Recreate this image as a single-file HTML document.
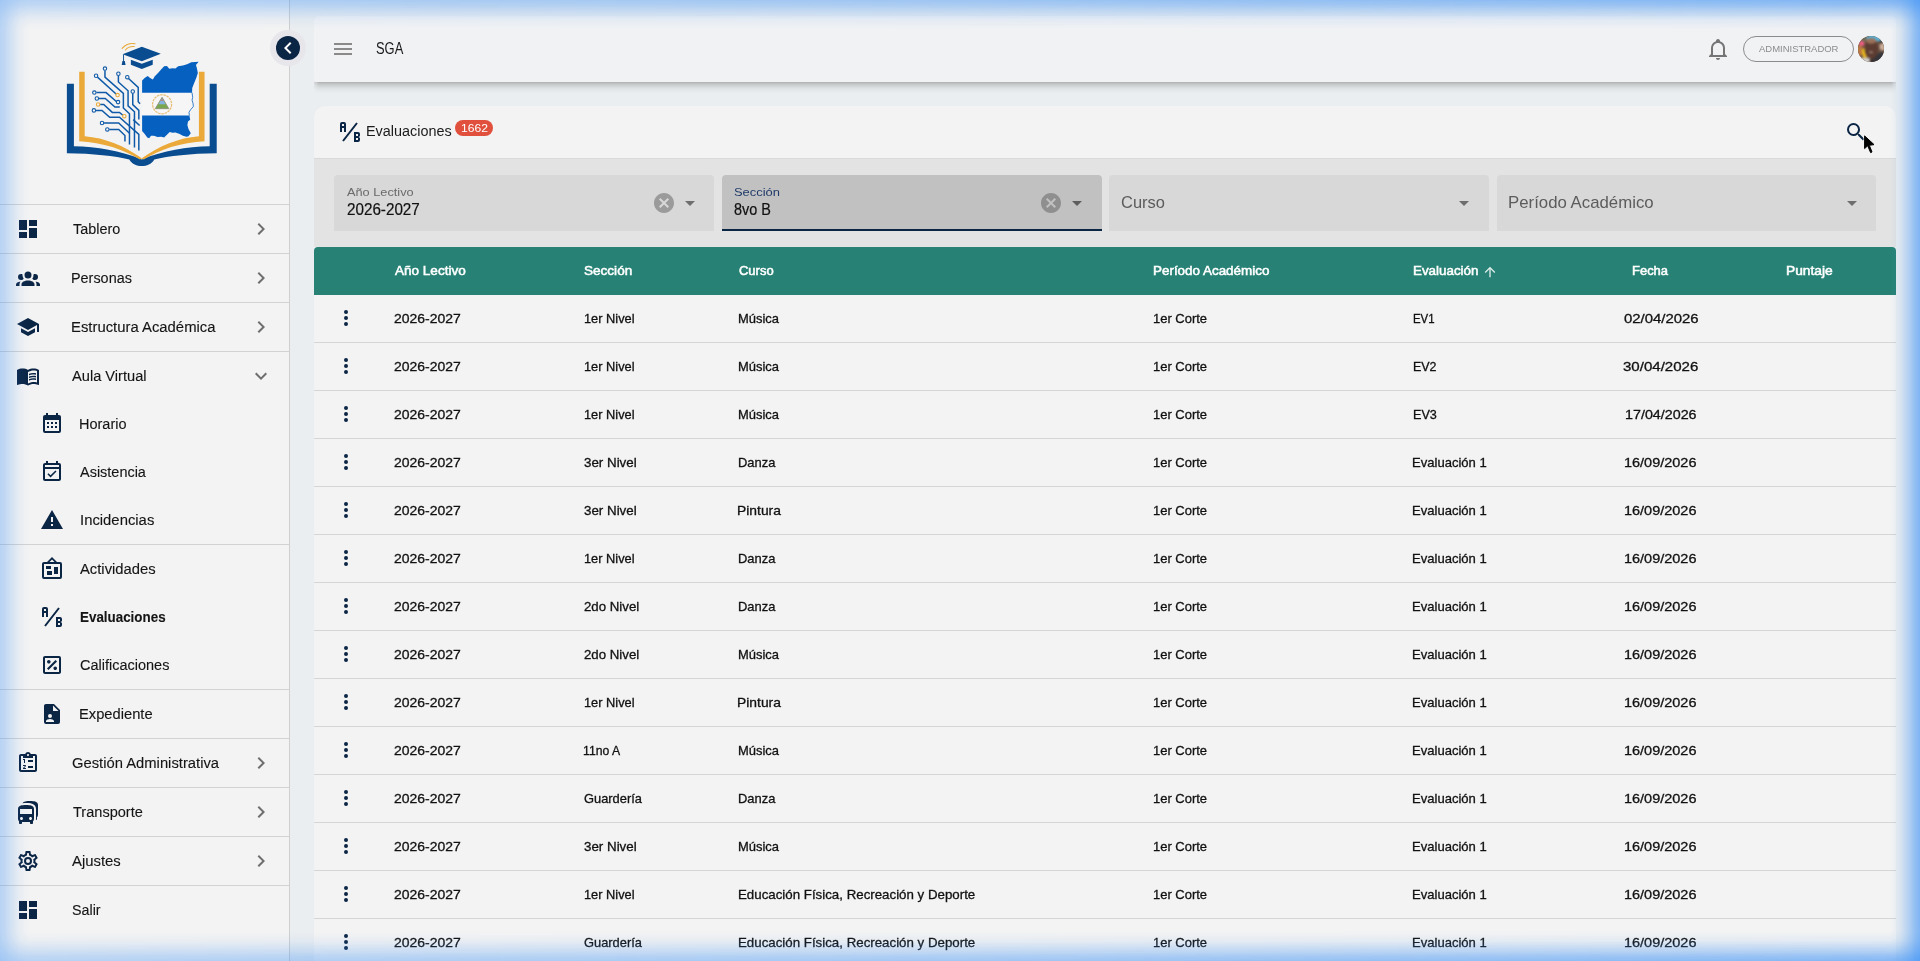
<!DOCTYPE html>
<html lang="es"><head><meta charset="utf-8"><title>SGA - Evaluaciones</title>
<style>
*{box-sizing:border-box;margin:0;padding:0}
html,body{width:1920px;height:961px;overflow:hidden}
body{position:relative;background:#ebeef0;font-family:"Liberation Sans",sans-serif;color:#1b1b1b}
ul{list-style:none}
h1{font-weight:400}
.t{position:absolute;white-space:nowrap;line-height:1;transform-origin:0 50%;display:block}
.i{position:absolute;fill:#0b2545;display:block}
.a{position:absolute;display:block}
#side{position:absolute;left:0;top:0;width:290px;height:961px;background:#f3f3f3;border-right:1px solid #cfcfcf}
#side li{position:absolute;left:0;width:289px;height:48px}
#side li.dv{height:1px;background:#d2d2d2}
#colb{position:absolute;left:270px;top:30px;width:36px;height:36px;border-radius:50%;background:#e7e7eb}
#colb b{position:absolute;left:6px;top:6px;width:24px;height:24px;border-radius:50%;background:#0b2545;display:block}
#top{position:absolute;left:314px;top:16px;width:1582px;height:66px;background:#f1f2f4;border-radius:5px 5px 3px 3px}
#tsh{position:absolute;left:314px;top:82px;width:1582px;height:12px;background:linear-gradient(to bottom,rgba(0,0,0,.26),rgba(0,0,0,.17) 2px,rgba(0,0,0,.105) 4px,rgba(0,0,0,.06) 6px,rgba(0,0,0,.028) 8px,rgba(0,0,0,0) 11.5px);-webkit-mask-image:linear-gradient(to right,rgba(0,0,0,.35),#000 5px,#000 1577px,rgba(0,0,0,.35));mask-image:linear-gradient(to right,rgba(0,0,0,.35),#000 5px,#000 1577px,rgba(0,0,0,.35))}
#chip{position:absolute;left:1429px;top:20px;width:111px;height:26px;border:1px solid #8c8c8c;border-radius:13px;color:#8c8c8c}
#av{position:absolute;left:1544px;top:20px;width:26px;height:26px;border-radius:50%;overflow:hidden;background:#8a6a55}
#card{position:absolute;left:314px;top:106px;width:1582px;height:900px;background:#f3f3f3;border-radius:12px 12px 0 0;overflow:hidden}
#ttl{position:absolute;left:0;top:0;width:1582px;height:52px}
#flt{position:absolute;left:0;top:52px;width:1582px;height:89px;background:#e3e3e3;border-top:1px solid #d9d9d9}
.f{position:absolute;top:16px;height:56px;background:#d8d8d8;border-radius:4px 4px 0 0}
.f.on{background:#c1c1c1;border-bottom:2px solid #0b2545}
.lb{color:#6a6a6a}
.on .lb{color:#1f3a68}
.ph{color:#5c5c5c}
#tbl{position:absolute;left:0;top:141px;width:1582px;height:759px}
#th{position:absolute;left:0;top:0;width:1582px;height:48px;background:#278275;border-radius:4px 4px 0 0}
.h{color:#fff;-webkit-text-stroke:.5px #fff}
.fv{color:#111;-webkit-text-stroke:.2px #111}
.rt{color:#111;-webkit-text-stroke:.28px #111}
.s{color:#151515;-webkit-text-stroke:.12px #151515}
.tr{position:absolute;left:0;width:1582px;height:48px;border-bottom:1px solid #d6d6d6}
#badge{position:absolute;left:141px;top:14px;width:38px;height:16px;border-radius:8px;background:#e0503d;color:#fff}
</style></head>
<body>
<nav id="side">
<svg class="a" style="left:50px;top:30px;width:190px;height:150px" viewBox="0 0 1217 961"><path fill="#0a4c90" d="M108,345H153V745C300,748 450,772 588,830C726,772 876,748 1023,745V345H1068V790C900,792 760,808 668,830C650,860 620,872 588,872C556,872 526,860 508,830C416,808 276,792 108,790Z"/><path fill="#eaa938" d="M187,268H222V680C350,690 480,742 588,822C696,742 826,690 954,680V268H990V712C840,720 700,765 600,830L588,824L576,830C476,765 336,720 187,712Z"/><g fill="none" stroke="#0f5aa8" stroke-width="9.5"><path d="M352,260 L352,302 L470,406 L470,500 L509,537 L509,733"/><path d="M304,302 L425,412"/><path d="M438,293 L438,333 L500,389 L500,486 L541,524 L541,753"/><path d="M503,311 L565,368 L565,460 L577,472"/><path d="M530,406 L530,478 L569,515 L569,574"/><path d="M297,401 L359,401 L425,458"/><path d="M312,439 L354,439 L416,494 L447,494"/><path d="M321,477 L344,477 L399,528 L445,528 L467,546"/><path d="M294,515 L333,515 L382,559 L445,559 L569,669 L569,772"/><path d="M346,596 L440,596 L509,662"/><path d="M379,637 L440,637 L480,676 L480,714"/><path d="M533,574 L574,612"/></g><g fill="#f3f3f3" stroke="#0f5aa8" stroke-width="7"><circle cx="352" cy="247" r="11"/><circle cx="295" cy="293" r="11"/><circle cx="438" cy="280" r="11"/><circle cx="495" cy="302" r="11"/><circle cx="530" cy="394" r="11"/><circle cx="284" cy="401" r="11"/><circle cx="300" cy="439" r="11"/><circle cx="436" cy="462" r="11"/><circle cx="281" cy="515" r="11"/><circle cx="333" cy="596" r="11"/><circle cx="367" cy="637" r="11"/></g><g fill="#f3f3f3" stroke="#eaa938" stroke-width="7"><circle cx="433" cy="417" r="11"/><circle cx="308" cy="477" r="11"/><circle cx="476" cy="552" r="11"/></g><path fill="#f6f6f6" d="M590,402L910,402L914,431L910,449L917,473L918,491L902,509L890,527L893,548L590,548Z"/><path fill="none" stroke="#0560c0" stroke-width="5" d="M910,402L914,431L910,449L917,473L918,491L902,509L890,527L893,548"/><path fill="#0560c0" d="M590,402L590,324L608,306L626,294L641,308L659,317L671,296L695,272L713,251L731,233L749,231L764,248L785,245L803,246L821,233L851,227L878,219L905,206L952,204L935,224L941,245L947,275L938,305L923,341L911,371L910,402Z"/><path fill="#0560c0" d="M590,548L893,548L898,575L884,587L880,608L887,635L902,662L887,680L875,684L851,677L827,665L803,656L785,659L767,654L749,671L731,688L713,684L689,686L665,677L647,678L635,694L623,689L608,668L590,647Z"/><circle cx="718" cy="476" r="61" fill="none" stroke="#e6bd75" stroke-width="8" stroke-dasharray="16 5"/><path d="M718,431L761,504H674Z" fill="#79a64f" stroke="#8d8a78" stroke-width="5" stroke-linejoin="round"/><path d="M718,438L740,476H695Z" fill="#86b4e4"/><path d="M718,438L727,455H708Z" fill="#b9878a"/><path fill="#0a4c90" d="M465,155L588,108L710,152L588,200Z"/><path fill="#0a4c90" d="M518,190L588,217L658,190V222L588,250L518,222Z"/><path fill="none" stroke="#0a4c90" stroke-width="6" d="M471,158V205"/><path fill="#0a4c90" d="M464,198H479L484,224H459Z"/><g fill="none" stroke="#eaa938" stroke-width="7" stroke-linecap="round"><path d="M462,118Q495,80 545,88"/><path d="M483,128Q505,102 540,106"/></g></svg>
<ul>
<li class="dv" style="top:204px"></li>
<li style="top:205px"><svg class="i" viewBox="0 0 24 24" style="left:16.00px;top:12.00px;width:24px;height:24px;"><path d="M13 3v6h8V3m-8 18h8V11h-8M3 21h8v-6H3m0-2h8V3H3z"/></svg><span class="t s" style="left:72.66px;top:15.96px;font-size:15.4px;transform:scaleX(0.9360);">Tablero</span><svg class="i" viewBox="0 0 24 24" style="left:249.20px;top:12.20px;width:24px;height:24px;fill:#6e6e6e;"><path d="M8.59 16.58 13.17 12 8.59 7.41 10 6l6 6-6 6z"/></svg></li>
<li class="dv" style="top:253px"></li>
<li style="top:254px"><svg class="i" viewBox="0 0 24 24" style="left:16.00px;top:12.00px;width:24px;height:24px;"><path d="M12 5.5A3.5 3.5 0 0 1 15.5 9a3.5 3.5 0 0 1-3.5 3.5A3.5 3.5 0 0 1 8.5 9 3.5 3.5 0 0 1 12 5.5M5 8c.56 0 1.08.15 1.53.42-.15 1.43.27 2.85 1.13 3.96C7.16 13.34 6.16 14 5 14a3 3 0 0 1-3-3 3 3 0 0 1 3-3m14 0a3 3 0 0 1 3 3 3 3 0 0 1-3 3c-1.16 0-2.16-.66-2.66-1.62a5.54 5.54 0 0 0 1.13-3.96c.45-.27.97-.42 1.53-.42M5.5 18.25c0-2.07 2.91-3.75 6.5-3.75s6.5 1.68 6.5 3.75V20h-13zM0 20v-1.5c0-1.39 1.89-2.56 4.45-2.9-.59.68-.95 1.62-.95 2.65V20zm24 0h-3.5v-1.75c0-1.03-.36-1.97-.95-2.65 2.56.34 4.45 1.51 4.45 2.9z"/></svg><span class="t s" style="left:71.07px;top:15.96px;font-size:15.4px;transform:scaleX(0.9360);">Personas</span><svg class="i" viewBox="0 0 24 24" style="left:249.20px;top:12.20px;width:24px;height:24px;fill:#6e6e6e;"><path d="M8.59 16.58 13.17 12 8.59 7.41 10 6l6 6-6 6z"/></svg></li>
<li class="dv" style="top:302px"></li>
<li style="top:303px"><svg class="i" viewBox="0 0 24 24" style="left:16.00px;top:12.00px;width:24px;height:24px;"><path d="M12 3 1 9l11 6 9-4.91V17h2V9M5 13.18v4L12 21l7-3.82v-4L12 17z"/></svg><span class="t s" style="left:71.01px;top:15.96px;font-size:15.4px;transform:scaleX(0.9653);">Estructura Académica</span><svg class="i" viewBox="0 0 24 24" style="left:249.20px;top:12.20px;width:24px;height:24px;fill:#6e6e6e;"><path d="M8.59 16.58 13.17 12 8.59 7.41 10 6l6 6-6 6z"/></svg></li>
<li class="dv" style="top:351px"></li>
<li style="top:352px"><svg class="i" viewBox="0 0 24 24" style="left:16.00px;top:12.00px;width:24px;height:24px;"><path d="M12 21.5c-1.35-.85-3.8-1.5-5.5-1.5-1.65 0-3.35.3-4.75 1.05-.1.05-.15.05-.25.05-.25 0-.5-.25-.5-.5V6c.6-.45 1.25-.75 2-1 1.11-.35 2.33-.5 3.5-.5 1.95 0 4.05.4 5.5 1.5 1.45-1.1 3.55-1.5 5.5-1.5 1.17 0 2.39.15 3.5.5.75.25 1.4.55 2 1v14.6c0 .25-.25.5-.5.5-.1 0-.15 0-.25-.05-1.4-.75-3.1-1.05-4.75-1.05-1.7 0-4.15.65-5.5 1.5M12 8v11.5c1.35-.85 3.8-1.5 5.5-1.5 1.2 0 2.4.15 3.5.5V7c-1.1-.35-2.3-.5-3.5-.5-1.7 0-4.15.65-5.5 1.5m1 3.5c1.11-.68 2.6-1 4.5-1 .91 0 1.76.09 2.5.28V9.23c-.87-.15-1.71-.23-2.5-.23q-2.655 0-4.5.84zm4.5.17c-1.71 0-3.21.26-4.5.79v1.69c1.11-.65 2.6-.99 4.5-.99 1.04 0 1.88.08 2.5.24v-1.5c-.87-.16-1.71-.23-2.5-.23m2.5 2.9c-.87-.16-1.71-.24-2.5-.24-1.83 0-3.33.27-4.5.8v1.69c1.11-.66 2.6-.99 4.5-.99 1.04 0 1.88.08 2.5.24z"/></svg><span class="t s" style="left:72.18px;top:15.96px;font-size:15.4px;transform:scaleX(0.9511);">Aula Virtual</span><svg class="i" viewBox="0 0 24 24" style="left:249.00px;top:12.00px;width:24px;height:24px;fill:#6e6e6e;"><path d="M7.41 8.58 12 13.17l4.59-4.59L18 10l-6 6-6-6z"/></svg></li>
<li style="top:400px"><svg class="i" viewBox="0 0 24 24" style="left:40.00px;top:12.00px;width:24px;height:24px;"><path d="M9 10v2H7v-2zm4 0v2h-2v-2zm4 0v2h-2v-2zm2-7a2 2 0 0 1 2 2v14a2 2 0 0 1-2 2H5a2 2 0 0 1-2-2V5a2 2 0 0 1 2-2h1V1h2v2h8V1h2v2zm0 16V8H5v11zM9 14v2H7v-2zm4 0v2h-2v-2zm4 0v2h-2v-2z"/></svg><span class="t s" style="left:79.25px;top:15.96px;font-size:15.4px;transform:scaleX(0.9410);">Horario</span></li>
<li style="top:448px"><svg class="i" viewBox="0 0 24 24" style="left:40.00px;top:12.00px;width:24px;height:24px;"><path d="M19 3h-1V1h-2v2H8V1H6v2H5c-1.1 0-2 .9-2 2v14a2 2 0 0 0 2 2h14c1.11 0 2-.89 2-2V5a2 2 0 0 0-2-2m0 16H5V9h14zM5 7V5h14v2zm5.56 10.46 5.94-5.93-1.07-1.06-4.87 4.87-2.11-2.11-1.06 1.06z"/></svg><span class="t s" style="left:80.38px;top:15.96px;font-size:15.4px;transform:scaleX(0.9397);">Asistencia</span></li>
<li style="top:496px"><svg class="i" viewBox="0 0 24 24" style="left:40.00px;top:12.00px;width:24px;height:24px;"><path d="M13 14h-2V9h2m0 9h-2v-2h2M1 21h22L12 2z"/></svg><span class="t s" style="left:79.74px;top:15.96px;font-size:15.4px;transform:scaleX(0.9650);">Incidencias</span></li>
<li class="dv" style="top:544px"></li>
<li style="top:545px"><svg class="i" viewBox="0 0 24 24" style="left:40.00px;top:12.00px;width:24px;height:24px;"><path d="M12.04 2.5 9.53 5h5zM4 7v13h16V7zm8-7 5 5h3a2 2 0 0 1 2 2v13a2 2 0 0 1-2 2H4a2 2 0 0 1-2-2V7a2 2 0 0 1 2-2h3zM7 18v-4h5v4zm7-1v-7h4v7zm-8-5V9h5v3z"/></svg><span class="t s" style="left:80.38px;top:15.96px;font-size:15.4px;transform:scaleX(0.9610);">Actividades</span></li>
<li style="top:593px"><svg class="i" viewBox="0 0 24 24" style="left:40.00px;top:12.00px;width:24px;height:24px;"><path d="M4 2a2 2 0 0 0-2 2v8h2V8h2v4h2V4a2 2 0 0 0-2-2zm0 2h2v2H4m18 9.5V14a2 2 0 0 0-2-2h-4v10h4a2 2 0 0 0 2-2v-1.5a1.54 1.54 0 0 0-1.5-1.5 1.54 1.54 0 0 0 1.5-1.5M20 20h-2v-2h2zm0-4h-2v-2h2M5.79 21.61l-1.58-1.22 14-18 1.58 1.22Z"/></svg><span class="t s" style="left:80.11px;top:15.96px;font-size:15.4px;transform:scaleX(0.8701);font-weight:700;">Evaluaciones</span></li>
<li style="top:641px"><svg class="i" viewBox="0 0 24 24" style="left:40.00px;top:12.00px;width:24px;height:24px;"><path d="M19 3H5c-1.11 0-2 .89-2 2v14a2 2 0 0 0 2 2h14c1.11 0 2-.89 2-2V5a2 2 0 0 0-2-2m0 16H5V5h14zm-2-3.78c0 .98-.8 1.78-1.78 1.78s-1.77-.8-1.77-1.78.79-1.77 1.77-1.77 1.78.79 1.78 1.77m-8.5 1.81L7 15.53 15.53 7l1.5 1.5zm-1.45-8.2c0-.99.79-1.78 1.78-1.78.98 0 1.77.79 1.77 1.78 0 .98-.79 1.77-1.77 1.77-.99 0-1.78-.79-1.78-1.77"/></svg><span class="t s" style="left:79.97px;top:15.96px;font-size:15.4px;transform:scaleX(0.9416);">Calificaciones</span></li>
<li class="dv" style="top:689px"></li>
<li style="top:690px"><svg class="i" viewBox="0 0 24 24" style="left:40.00px;top:12.00px;width:24px;height:24px;"><path d="M13 9h5.5L13 3.5zM6 2h8l6 6v12a2 2 0 0 1-2 2H6a2 2 0 0 1-2-2V4c0-1.11.89-2 2-2m8 18v-1c0-1.33-2.67-2-4-2s-4 .67-4 2v1zm-4-8a2 2 0 0 0-2 2 2 2 0 0 0 2 2 2 2 0 0 0 2-2 2 2 0 0 0-2-2"/></svg><span class="t s" style="left:79.22px;top:15.96px;font-size:15.4px;transform:scaleX(0.9552);">Expediente</span></li>
<li class="dv" style="top:738px"></li>
<li style="top:739px"><svg class="i" viewBox="0 0 24 24" style="left:16.00px;top:12.00px;width:24px;height:24px;"><path d="M19 3h-4.18C14.4 1.84 13.3 1 12 1s-2.4.84-2.82 2H5c-1.1 0-2 .9-2 2v14c0 1.1.9 2 2 2h14c1.1 0 2-.9 2-2V5c0-1.1-.9-2-2-2m-7 0c.55 0 1 .45 1 1s-.45 1-1 1-1-.45-1-1 .45-1 1-1M7 7h10V5h2v14H5V5h2zm5 10v-2h5v2zm0-6V9h5v2zm-4 1V9H7V8h2v4zm1.25 2c.41 0 .75.34.75.75 0 .2-.08.39-.21.52L8.12 17H10v1H7v-.92L9 15H7v-1z"/></svg><span class="t s" style="left:71.74px;top:15.96px;font-size:15.4px;transform:scaleX(0.9602);">Gestión Administrativa</span><svg class="i" viewBox="0 0 24 24" style="left:249.20px;top:12.20px;width:24px;height:24px;fill:#6e6e6e;"><path d="M8.59 16.58 13.17 12 8.59 7.41 10 6l6 6-6 6z"/></svg></li>
<li class="dv" style="top:787px"></li>
<li style="top:788px"><svg class="i" viewBox="0 0 24 24" style="left:16.00px;top:12.00px;width:24px;height:24px;"><path d="M10 5c-4.42 0-8 .5-8 4v10c0 .85.37 1.66 1 2.22V23c0 .55.45 1 1 1h1c.55 0 1-.45 1-1v-1h8v1c0 .55.45 1 1 1h1c.55 0 1-.45 1-1v-1.78c.63-.56 1-1.37 1-2.22V9c0-3.5-3.58-4-8-4M5.5 20c-.83 0-1.5-.67-1.5-1.5S4.67 17 5.5 17s1.5.67 1.5 1.5S6.33 20 5.5 20m9 0c-.83 0-1.5-.67-1.5-1.5s.67-1.5 1.5-1.5 1.5.67 1.5 1.5-.67 1.5-1.5 1.5m1.5-6H4V9h12zm6-9v10c0 .85-.37 1.66-1 2.22V19c0 .55-.45 1-1 1h-.12c.07-.32.12-.65.12-1V9c0-6-7-6-10-6-.91 0-2.2 0-3.54.17C7.55 1.32 10.5 1 14 1c4.42 0 8 .5 8 4"/></svg><span class="t s" style="left:72.66px;top:15.96px;font-size:15.4px;transform:scaleX(0.9459);">Transporte</span><svg class="i" viewBox="0 0 24 24" style="left:249.20px;top:12.20px;width:24px;height:24px;fill:#6e6e6e;"><path d="M8.59 16.58 13.17 12 8.59 7.41 10 6l6 6-6 6z"/></svg></li>
<li class="dv" style="top:836px"></li>
<li style="top:837px"><svg class="i" viewBox="0 0 24 24" style="left:16.00px;top:12.00px;width:24px;height:24px;"><path d="M12 8a4 4 0 0 1 4 4 4 4 0 0 1-4 4 4 4 0 0 1-4-4 4 4 0 0 1 4-4m0 2a2 2 0 0 0-2 2 2 2 0 0 0 2 2 2 2 0 0 0 2-2 2 2 0 0 0-2-2m-2 12c-.25 0-.46-.18-.5-.42l-.37-2.65c-.63-.25-1.17-.59-1.69-.99l-2.49 1.01c-.22.08-.49 0-.61-.22l-2-3.46a.493.493 0 0 1 .12-.64l2.11-1.66L4.5 12l.07-1-2.11-1.63a.493.493 0 0 1-.12-.64l2-3.46c.12-.22.39-.31.61-.22l2.49 1c.52-.39 1.06-.73 1.69-.98l.37-2.65c.04-.24.25-.42.5-.42h4c.25 0 .46.18.5.42l.37 2.65c.63.25 1.17.59 1.69.98l2.49-1c.22-.09.49 0 .61.22l2 3.46c.13.22.07.49-.12.64L19.43 11l.07 1-.07 1 2.11 1.63c.19.15.25.42.12.64l-2 3.46c-.12.22-.39.31-.61.22l-2.49-1c-.52.39-1.06.73-1.69.98l-.37 2.65c-.04.24-.25.42-.5.42zm1.25-18-.37 2.61c-1.2.25-2.26.89-3.03 1.78L5.44 7.35l-.75 1.3L6.8 10.2a5.55 5.55 0 0 0 0 3.6l-2.12 1.56.75 1.3 2.43-1.04c.77.88 1.82 1.52 3.01 1.76l.37 2.62h1.52l.37-2.61c1.19-.25 2.24-.89 3.01-1.77l2.43 1.04.75-1.3-2.12-1.55c.4-1.17.4-2.44 0-3.61l2.11-1.55-.75-1.3-2.41 1.04a5.42 5.42 0 0 0-3.03-1.77L12.75 4z"/></svg><span class="t s" style="left:72.18px;top:15.96px;font-size:15.4px;transform:scaleX(0.9646);">Ajustes</span><svg class="i" viewBox="0 0 24 24" style="left:249.20px;top:12.20px;width:24px;height:24px;fill:#6e6e6e;"><path d="M8.59 16.58 13.17 12 8.59 7.41 10 6l6 6-6 6z"/></svg></li>
<li class="dv" style="top:885px"></li>
<li style="top:886px"><svg class="i" viewBox="0 0 24 24" style="left:16.00px;top:12.00px;width:24px;height:24px;"><path d="M13 3v6h8V3m-8 18h8V11h-8M3 21h8v-6H3m0-2h8V3H3z"/></svg><span class="t s" style="left:71.95px;top:15.96px;font-size:15.4px;transform:scaleX(0.9280);">Salir</span></li>
</ul></nav>
<div id="tsh"></div>
<header id="top">
<svg class="i" viewBox="0 0 24 24" style="left:17.00px;top:21.00px;width:24px;height:24px;fill:#8a8a8a;"><path d="M3 6h18v2H3zm0 5h18v2H3zm0 5h18v2H3z"/></svg>
<span class="t" style="left:61.50px;top:24.79px;font-size:15.6px;transform:scaleX(0.8268);">SGA</span>
<svg class="i" viewBox="0 0 24 24" style="left:1391.70px;top:20.80px;width:24px;height:24px;fill:#757575;"><path d="M10 21h4c0 1.1-.9 2-2 2s-2-.9-2-2m11-2v1H3v-1l2-2v-6c0-3.1 2-5.8 5-6.7V4c0-1.1.9-2 2-2s2 .9 2 2v.3c3 .9 5 3.6 5 6.7v6zm-4-8c0-2.8-2.2-5-5-5s-5 2.2-5 5v7h10z"/></svg>
<div id="chip"><span class="t" style="left:14.99px;top:6.79px;font-size:9.7px;transform:scaleX(0.9774);">ADMINISTRADOR</span></div>
<div id="av"><svg width="26" height="26" viewBox="0 0 26 26"><rect width="26" height="26" fill="#6b5142"/><g style="filter:blur(.9px)"><rect x="-3" y="-3" width="11" height="9" fill="#6e6a52"/><ellipse cx="17" cy="2" rx="9" ry="3.6" fill="#58b5dc"/><ellipse cx="24.5" cy="10.5" rx="3" ry="4" fill="#cdb09c"/><ellipse cx="23.5" cy="6" rx="2" ry="1.6" fill="#3a2e2a"/><circle cx="3.6" cy="7.4" r="2.7" fill="#ee5c84"/><ellipse cx="1.4" cy="14.5" rx="3" ry="5.5" fill="#bb7a42"/><path d="M4.2 12.5 L8.2 12 L9.6 20 L6 23 L4 18Z" fill="#ecbc1e"/><path d="M2 22 L12 21.5 L12 29 L0 29Z" fill="#cfcdca"/><path d="M16 19.5 L23 16 L29 17 L29 29 L12 29Z" fill="#35363c"/><ellipse cx="13.4" cy="13" rx="6.8" ry="10" fill="#5c3c31"/><ellipse cx="13.2" cy="4.8" rx="5.2" ry="2.9" fill="#9b725a"/><ellipse cx="13" cy="16.3" rx="2.2" ry=".8" fill="#b79a8c"/><ellipse cx="13" cy="24.6" rx="1.2" ry="1.6" fill="#2c1a16"/></g></svg></div>
</header>
<div id="colb"><b></b><svg class="i" viewBox="0 0 24 24" style="left:5.60px;top:6.00px;width:24px;height:24px;fill:#fff;"><path d="M15.41 16.58 10.83 12l4.58-4.59L14 6l-6 6 6 6z"/></svg></div>
<main id="card">
<div id="ttl">
<svg class="i" viewBox="0 0 24 24" style="left:24.00px;top:14.00px;width:24px;height:24px;"><path d="M4 2a2 2 0 0 0-2 2v8h2V8h2v4h2V4a2 2 0 0 0-2-2zm0 2h2v2H4m18 9.5V14a2 2 0 0 0-2-2h-4v10h4a2 2 0 0 0 2-2v-1.5a1.54 1.54 0 0 0-1.5-1.5 1.54 1.54 0 0 0 1.5-1.5M20 20h-2v-2h2zm0-4h-2v-2h2M5.79 21.61l-1.58-1.22 14-18 1.58 1.22Z"/></svg>
<h1 class="t" style="left:51.56px;top:17.13px;font-size:15.2px;transform:scaleX(0.9485);">Evaluaciones</h1>
<div id="badge"><span class="t" style="left:5.52px;top:3.09px;font-size:11px;transform:scaleX(1.1003);">1662</span></div>
<svg class="i" viewBox="0 0 24 24" style="left:1530.00px;top:14.00px;width:24px;height:24px;"><path d="M9.5 3A6.5 6.5 0 0 1 16 9.5c0 1.61-.59 3.09-1.56 4.23l.27.27h.79l5 5-1.5 1.5-5-5v-.79l-.27-.27A6.52 6.52 0 0 1 9.5 16 6.5 6.5 0 0 1 3 9.5 6.5 6.5 0 0 1 9.5 3m0 2C7 5 5 7 5 9.5S7 14 9.5 14 14 12 14 9.5 12 5 9.5 5"/></svg>
</div>
<div id="flt">
<div class="f" style="left:20px;width:380px"><span class="t lb" style="left:12.72px;top:11.18px;font-size:11.6px;transform:scaleX(1.0995);">Año Lectivo</span><span class="t fv" style="left:12.74px;top:26.99px;font-size:15.6px;transform:scaleX(0.9760);">2026-2027</span><svg class="i" viewBox="0 0 24 24" style="left:317.50px;top:16.00px;width:24px;height:24px;fill:#9b9b9b;"><path d="M12 2c5.53 0 10 4.47 10 10s-4.47 10-10 10S2 17.53 2 12 6.47 2 12 2m3.59 5L12 10.59 8.41 7 7 8.41 10.59 12 7 15.59 8.41 17 12 13.41 15.59 17 17 15.59 13.41 12 17 8.41z"/></svg><svg class="i" viewBox="0 0 24 24" style="left:343.60px;top:16.00px;width:24px;height:24px;fill:#6e6e6e;"><path d="m7 10 5 5 5-5z"/></svg></div>
<div class="f on" style="left:408px;width:379.5px"><span class="t lb" style="left:11.66px;top:11.18px;font-size:11.6px;transform:scaleX(1.1149);">Sección</span><span class="t fv" style="left:12.06px;top:26.99px;font-size:15.6px;transform:scaleX(0.9256);">8vo B</span><svg class="i" viewBox="0 0 24 24" style="left:317.00px;top:16.00px;width:24px;height:24px;fill:#8f8f8f;"><path d="M12 2c5.53 0 10 4.47 10 10s-4.47 10-10 10S2 17.53 2 12 6.47 2 12 2m3.59 5L12 10.59 8.41 7 7 8.41 10.59 12 7 15.59 8.41 17 12 13.41 15.59 17 17 15.59 13.41 12 17 8.41z"/></svg><svg class="i" viewBox="0 0 24 24" style="left:343.00px;top:16.00px;width:24px;height:24px;fill:#5e5e5e;"><path d="m7 10 5 5 5-5z"/></svg></div>
<div class="f" style="left:795px;width:379.5px"><span class="t ph" style="left:12.49px;top:20.35px;font-size:16.6px;transform:scaleX(0.9925);">Curso</span><svg class="i" viewBox="0 0 24 24" style="left:343.40px;top:16.00px;width:24px;height:24px;fill:#6e6e6e;"><path d="m7 10 5 5 5-5z"/></svg></div>
<div class="f" style="left:1182.5px;width:379.5px"><span class="t ph" style="left:11.95px;top:20.35px;font-size:16.6px;transform:scaleX(1.0119);">Período Académico</span><svg class="i" viewBox="0 0 24 24" style="left:343.50px;top:16.00px;width:24px;height:24px;fill:#6e6e6e;"><path d="m7 10 5 5 5-5z"/></svg></div>
</div>
<div id="tbl">
<div id="th">
<span class="t h" style="left:80.80px;top:17.79px;font-size:12.3px;transform:scaleX(1.1007);">Año Lectivo</span>
<span class="t h" style="left:269.58px;top:17.79px;font-size:12.3px;transform:scaleX(1.1018);">Sección</span>
<span class="t h" style="left:424.61px;top:17.79px;font-size:12.3px;transform:scaleX(1.0554);">Curso</span>
<span class="t h" style="left:838.95px;top:17.79px;font-size:12.3px;transform:scaleX(1.0914);">Período Académico</span>
<span class="t h" style="left:1099.11px;top:17.79px;font-size:12.3px;transform:scaleX(1.0875);">Evaluación</span>
<svg class="i" viewBox="0 0 24 24" style="left:1168.30px;top:16.50px;width:16px;height:16px;fill:rgba(255,255,255,.85);"><path d="M13 20h-2V8l-5.5 5.5-1.42-1.42L12 4.16l7.92 7.92-1.42 1.42L13 8z"/></svg>
<span class="t h" style="left:1318.41px;top:17.79px;font-size:12.3px;transform:scaleX(1.0543);">Fecha</span>
<span class="t h" style="left:1472.26px;top:17.79px;font-size:12.3px;transform:scaleX(1.1205);">Puntaje</span>
</div>
<div class="tr" style="top:48px"><svg class="i" viewBox="0 0 24 24" style="left:20.00px;top:11.20px;width:24px;height:24px;"><path d="M12 16a2 2 0 0 1 2 2 2 2 0 0 1-2 2 2 2 0 0 1-2-2 2 2 0 0 1 2-2m0-6a2 2 0 0 1 2 2 2 2 0 0 1-2 2 2 2 0 0 1-2-2 2 2 0 0 1 2-2m0-6a2 2 0 0 1 2 2 2 2 0 0 1-2 2 2 2 0 0 1-2-2 2 2 0 0 1 2-2"/></svg><span class="t rt" style="left:80.15px;top:19.13px;font-size:11.9px;transform:scaleX(1.1728);">2026-2027</span><span class="t rt" style="left:269.97px;top:19.13px;font-size:11.9px;transform:scaleX(1.0767);">1er Nivel</span><span class="t rt" style="left:423.67px;top:19.13px;font-size:11.9px;transform:scaleX(1.0897);">Música</span><span class="t rt" style="left:838.89px;top:19.13px;font-size:11.9px;transform:scaleX(1.0907);">1er Corte</span><span class="t rt" style="left:1099.06px;top:19.13px;font-size:11.9px;transform:scaleX(0.9597);">EV1</span><span class="t rt" style="left:1309.85px;top:19.13px;font-size:11.9px;transform:scaleX(1.2539);">02/04/2026</span></div>
<div class="tr" style="top:96px"><svg class="i" viewBox="0 0 24 24" style="left:20.00px;top:11.20px;width:24px;height:24px;"><path d="M12 16a2 2 0 0 1 2 2 2 2 0 0 1-2 2 2 2 0 0 1-2-2 2 2 0 0 1 2-2m0-6a2 2 0 0 1 2 2 2 2 0 0 1-2 2 2 2 0 0 1-2-2 2 2 0 0 1 2-2m0-6a2 2 0 0 1 2 2 2 2 0 0 1-2 2 2 2 0 0 1-2-2 2 2 0 0 1 2-2"/></svg><span class="t rt" style="left:80.15px;top:19.13px;font-size:11.9px;transform:scaleX(1.1728);">2026-2027</span><span class="t rt" style="left:269.97px;top:19.13px;font-size:11.9px;transform:scaleX(1.0767);">1er Nivel</span><span class="t rt" style="left:423.67px;top:19.13px;font-size:11.9px;transform:scaleX(1.0897);">Música</span><span class="t rt" style="left:838.89px;top:19.13px;font-size:11.9px;transform:scaleX(1.0907);">1er Corte</span><span class="t rt" style="left:1098.57px;top:19.13px;font-size:11.9px;transform:scaleX(1.0459);">EV2</span><span class="t rt" style="left:1309.30px;top:19.13px;font-size:11.9px;transform:scaleX(1.2649);">30/04/2026</span></div>
<div class="tr" style="top:144px"><svg class="i" viewBox="0 0 24 24" style="left:20.00px;top:11.20px;width:24px;height:24px;"><path d="M12 16a2 2 0 0 1 2 2 2 2 0 0 1-2 2 2 2 0 0 1-2-2 2 2 0 0 1 2-2m0-6a2 2 0 0 1 2 2 2 2 0 0 1-2 2 2 2 0 0 1-2-2 2 2 0 0 1 2-2m0-6a2 2 0 0 1 2 2 2 2 0 0 1-2 2 2 2 0 0 1-2-2 2 2 0 0 1 2-2"/></svg><span class="t rt" style="left:80.15px;top:19.13px;font-size:11.9px;transform:scaleX(1.1728);">2026-2027</span><span class="t rt" style="left:269.97px;top:19.13px;font-size:11.9px;transform:scaleX(1.0767);">1er Nivel</span><span class="t rt" style="left:423.67px;top:19.13px;font-size:11.9px;transform:scaleX(1.0897);">Música</span><span class="t rt" style="left:838.89px;top:19.13px;font-size:11.9px;transform:scaleX(1.0907);">1er Corte</span><span class="t rt" style="left:1098.55px;top:19.13px;font-size:11.9px;transform:scaleX(1.0615);">EV3</span><span class="t rt" style="left:1311.01px;top:19.13px;font-size:11.9px;transform:scaleX(1.2024);">17/04/2026</span></div>
<div class="tr" style="top:192px"><svg class="i" viewBox="0 0 24 24" style="left:20.00px;top:11.20px;width:24px;height:24px;"><path d="M12 16a2 2 0 0 1 2 2 2 2 0 0 1-2 2 2 2 0 0 1-2-2 2 2 0 0 1 2-2m0-6a2 2 0 0 1 2 2 2 2 0 0 1-2 2 2 2 0 0 1-2-2 2 2 0 0 1 2-2m0-6a2 2 0 0 1 2 2 2 2 0 0 1-2 2 2 2 0 0 1-2-2 2 2 0 0 1 2-2"/></svg><span class="t rt" style="left:80.15px;top:19.13px;font-size:11.9px;transform:scaleX(1.1728);">2026-2027</span><span class="t rt" style="left:270.39px;top:19.13px;font-size:11.9px;transform:scaleX(1.1224);">3er Nivel</span><span class="t rt" style="left:423.67px;top:19.13px;font-size:11.9px;transform:scaleX(1.0867);">Danza</span><span class="t rt" style="left:838.89px;top:19.13px;font-size:11.9px;transform:scaleX(1.0907);">1er Corte</span><span class="t rt" style="left:1098.46px;top:19.13px;font-size:11.9px;transform:scaleX(1.0977);">Evaluación 1</span><span class="t rt" style="left:1310.29px;top:19.13px;font-size:11.9px;transform:scaleX(1.2172);">16/09/2026</span></div>
<div class="tr" style="top:240px"><svg class="i" viewBox="0 0 24 24" style="left:20.00px;top:11.20px;width:24px;height:24px;"><path d="M12 16a2 2 0 0 1 2 2 2 2 0 0 1-2 2 2 2 0 0 1-2-2 2 2 0 0 1 2-2m0-6a2 2 0 0 1 2 2 2 2 0 0 1-2 2 2 2 0 0 1-2-2 2 2 0 0 1 2-2m0-6a2 2 0 0 1 2 2 2 2 0 0 1-2 2 2 2 0 0 1-2-2 2 2 0 0 1 2-2"/></svg><span class="t rt" style="left:80.15px;top:19.13px;font-size:11.9px;transform:scaleX(1.1728);">2026-2027</span><span class="t rt" style="left:270.39px;top:19.13px;font-size:11.9px;transform:scaleX(1.1224);">3er Nivel</span><span class="t rt" style="left:423.40px;top:19.13px;font-size:11.9px;transform:scaleX(1.1660);">Pintura</span><span class="t rt" style="left:838.89px;top:19.13px;font-size:11.9px;transform:scaleX(1.0907);">1er Corte</span><span class="t rt" style="left:1098.46px;top:19.13px;font-size:11.9px;transform:scaleX(1.0977);">Evaluación 1</span><span class="t rt" style="left:1310.29px;top:19.13px;font-size:11.9px;transform:scaleX(1.2172);">16/09/2026</span></div>
<div class="tr" style="top:288px"><svg class="i" viewBox="0 0 24 24" style="left:20.00px;top:11.20px;width:24px;height:24px;"><path d="M12 16a2 2 0 0 1 2 2 2 2 0 0 1-2 2 2 2 0 0 1-2-2 2 2 0 0 1 2-2m0-6a2 2 0 0 1 2 2 2 2 0 0 1-2 2 2 2 0 0 1-2-2 2 2 0 0 1 2-2m0-6a2 2 0 0 1 2 2 2 2 0 0 1-2 2 2 2 0 0 1-2-2 2 2 0 0 1 2-2"/></svg><span class="t rt" style="left:80.15px;top:19.13px;font-size:11.9px;transform:scaleX(1.1728);">2026-2027</span><span class="t rt" style="left:269.97px;top:19.13px;font-size:11.9px;transform:scaleX(1.0767);">1er Nivel</span><span class="t rt" style="left:423.67px;top:19.13px;font-size:11.9px;transform:scaleX(1.0867);">Danza</span><span class="t rt" style="left:838.89px;top:19.13px;font-size:11.9px;transform:scaleX(1.0907);">1er Corte</span><span class="t rt" style="left:1098.46px;top:19.13px;font-size:11.9px;transform:scaleX(1.0977);">Evaluación 1</span><span class="t rt" style="left:1310.29px;top:19.13px;font-size:11.9px;transform:scaleX(1.2172);">16/09/2026</span></div>
<div class="tr" style="top:336px"><svg class="i" viewBox="0 0 24 24" style="left:20.00px;top:11.20px;width:24px;height:24px;"><path d="M12 16a2 2 0 0 1 2 2 2 2 0 0 1-2 2 2 2 0 0 1-2-2 2 2 0 0 1 2-2m0-6a2 2 0 0 1 2 2 2 2 0 0 1-2 2 2 2 0 0 1-2-2 2 2 0 0 1 2-2m0-6a2 2 0 0 1 2 2 2 2 0 0 1-2 2 2 2 0 0 1-2-2 2 2 0 0 1 2-2"/></svg><span class="t rt" style="left:80.15px;top:19.13px;font-size:11.9px;transform:scaleX(1.1728);">2026-2027</span><span class="t rt" style="left:269.65px;top:19.13px;font-size:11.9px;transform:scaleX(1.1140);">2do Nivel</span><span class="t rt" style="left:423.67px;top:19.13px;font-size:11.9px;transform:scaleX(1.0867);">Danza</span><span class="t rt" style="left:838.89px;top:19.13px;font-size:11.9px;transform:scaleX(1.0907);">1er Corte</span><span class="t rt" style="left:1098.46px;top:19.13px;font-size:11.9px;transform:scaleX(1.0977);">Evaluación 1</span><span class="t rt" style="left:1310.29px;top:19.13px;font-size:11.9px;transform:scaleX(1.2172);">16/09/2026</span></div>
<div class="tr" style="top:384px"><svg class="i" viewBox="0 0 24 24" style="left:20.00px;top:11.20px;width:24px;height:24px;"><path d="M12 16a2 2 0 0 1 2 2 2 2 0 0 1-2 2 2 2 0 0 1-2-2 2 2 0 0 1 2-2m0-6a2 2 0 0 1 2 2 2 2 0 0 1-2 2 2 2 0 0 1-2-2 2 2 0 0 1 2-2m0-6a2 2 0 0 1 2 2 2 2 0 0 1-2 2 2 2 0 0 1-2-2 2 2 0 0 1 2-2"/></svg><span class="t rt" style="left:80.15px;top:19.13px;font-size:11.9px;transform:scaleX(1.1728);">2026-2027</span><span class="t rt" style="left:269.65px;top:19.13px;font-size:11.9px;transform:scaleX(1.1140);">2do Nivel</span><span class="t rt" style="left:423.67px;top:19.13px;font-size:11.9px;transform:scaleX(1.0897);">Música</span><span class="t rt" style="left:838.89px;top:19.13px;font-size:11.9px;transform:scaleX(1.0907);">1er Corte</span><span class="t rt" style="left:1098.46px;top:19.13px;font-size:11.9px;transform:scaleX(1.0977);">Evaluación 1</span><span class="t rt" style="left:1310.29px;top:19.13px;font-size:11.9px;transform:scaleX(1.2172);">16/09/2026</span></div>
<div class="tr" style="top:432px"><svg class="i" viewBox="0 0 24 24" style="left:20.00px;top:11.20px;width:24px;height:24px;"><path d="M12 16a2 2 0 0 1 2 2 2 2 0 0 1-2 2 2 2 0 0 1-2-2 2 2 0 0 1 2-2m0-6a2 2 0 0 1 2 2 2 2 0 0 1-2 2 2 2 0 0 1-2-2 2 2 0 0 1 2-2m0-6a2 2 0 0 1 2 2 2 2 0 0 1-2 2 2 2 0 0 1-2-2 2 2 0 0 1 2-2"/></svg><span class="t rt" style="left:80.15px;top:19.13px;font-size:11.9px;transform:scaleX(1.1728);">2026-2027</span><span class="t rt" style="left:269.97px;top:19.13px;font-size:11.9px;transform:scaleX(1.0767);">1er Nivel</span><span class="t rt" style="left:423.40px;top:19.13px;font-size:11.9px;transform:scaleX(1.1660);">Pintura</span><span class="t rt" style="left:838.89px;top:19.13px;font-size:11.9px;transform:scaleX(1.0907);">1er Corte</span><span class="t rt" style="left:1098.46px;top:19.13px;font-size:11.9px;transform:scaleX(1.0977);">Evaluación 1</span><span class="t rt" style="left:1310.29px;top:19.13px;font-size:11.9px;transform:scaleX(1.2172);">16/09/2026</span></div>
<div class="tr" style="top:480px"><svg class="i" viewBox="0 0 24 24" style="left:20.00px;top:11.20px;width:24px;height:24px;"><path d="M12 16a2 2 0 0 1 2 2 2 2 0 0 1-2 2 2 2 0 0 1-2-2 2 2 0 0 1 2-2m0-6a2 2 0 0 1 2 2 2 2 0 0 1-2 2 2 2 0 0 1-2-2 2 2 0 0 1 2-2m0-6a2 2 0 0 1 2 2 2 2 0 0 1-2 2 2 2 0 0 1-2-2 2 2 0 0 1 2-2"/></svg><span class="t rt" style="left:80.15px;top:19.13px;font-size:11.9px;transform:scaleX(1.1728);">2026-2027</span><span class="t rt" style="left:269.36px;top:19.13px;font-size:11.9px;transform:scaleX(1.0266);">11no A</span><span class="t rt" style="left:423.67px;top:19.13px;font-size:11.9px;transform:scaleX(1.0897);">Música</span><span class="t rt" style="left:838.89px;top:19.13px;font-size:11.9px;transform:scaleX(1.0907);">1er Corte</span><span class="t rt" style="left:1098.46px;top:19.13px;font-size:11.9px;transform:scaleX(1.0977);">Evaluación 1</span><span class="t rt" style="left:1310.29px;top:19.13px;font-size:11.9px;transform:scaleX(1.2172);">16/09/2026</span></div>
<div class="tr" style="top:528px"><svg class="i" viewBox="0 0 24 24" style="left:20.00px;top:11.20px;width:24px;height:24px;"><path d="M12 16a2 2 0 0 1 2 2 2 2 0 0 1-2 2 2 2 0 0 1-2-2 2 2 0 0 1 2-2m0-6a2 2 0 0 1 2 2 2 2 0 0 1-2 2 2 2 0 0 1-2-2 2 2 0 0 1 2-2m0-6a2 2 0 0 1 2 2 2 2 0 0 1-2 2 2 2 0 0 1-2-2 2 2 0 0 1 2-2"/></svg><span class="t rt" style="left:80.15px;top:19.13px;font-size:11.9px;transform:scaleX(1.1728);">2026-2027</span><span class="t rt" style="left:269.57px;top:19.13px;font-size:11.9px;transform:scaleX(1.0825);">Guardería</span><span class="t rt" style="left:423.67px;top:19.13px;font-size:11.9px;transform:scaleX(1.0867);">Danza</span><span class="t rt" style="left:838.89px;top:19.13px;font-size:11.9px;transform:scaleX(1.0907);">1er Corte</span><span class="t rt" style="left:1098.46px;top:19.13px;font-size:11.9px;transform:scaleX(1.0977);">Evaluación 1</span><span class="t rt" style="left:1310.29px;top:19.13px;font-size:11.9px;transform:scaleX(1.2172);">16/09/2026</span></div>
<div class="tr" style="top:576px"><svg class="i" viewBox="0 0 24 24" style="left:20.00px;top:11.20px;width:24px;height:24px;"><path d="M12 16a2 2 0 0 1 2 2 2 2 0 0 1-2 2 2 2 0 0 1-2-2 2 2 0 0 1 2-2m0-6a2 2 0 0 1 2 2 2 2 0 0 1-2 2 2 2 0 0 1-2-2 2 2 0 0 1 2-2m0-6a2 2 0 0 1 2 2 2 2 0 0 1-2 2 2 2 0 0 1-2-2 2 2 0 0 1 2-2"/></svg><span class="t rt" style="left:80.15px;top:19.13px;font-size:11.9px;transform:scaleX(1.1728);">2026-2027</span><span class="t rt" style="left:270.39px;top:19.13px;font-size:11.9px;transform:scaleX(1.1224);">3er Nivel</span><span class="t rt" style="left:423.67px;top:19.13px;font-size:11.9px;transform:scaleX(1.0897);">Música</span><span class="t rt" style="left:838.89px;top:19.13px;font-size:11.9px;transform:scaleX(1.0907);">1er Corte</span><span class="t rt" style="left:1098.46px;top:19.13px;font-size:11.9px;transform:scaleX(1.0977);">Evaluación 1</span><span class="t rt" style="left:1310.29px;top:19.13px;font-size:11.9px;transform:scaleX(1.2172);">16/09/2026</span></div>
<div class="tr" style="top:624px"><svg class="i" viewBox="0 0 24 24" style="left:20.00px;top:11.20px;width:24px;height:24px;"><path d="M12 16a2 2 0 0 1 2 2 2 2 0 0 1-2 2 2 2 0 0 1-2-2 2 2 0 0 1 2-2m0-6a2 2 0 0 1 2 2 2 2 0 0 1-2 2 2 2 0 0 1-2-2 2 2 0 0 1 2-2m0-6a2 2 0 0 1 2 2 2 2 0 0 1-2 2 2 2 0 0 1-2-2 2 2 0 0 1 2-2"/></svg><span class="t rt" style="left:80.15px;top:19.13px;font-size:11.9px;transform:scaleX(1.1728);">2026-2027</span><span class="t rt" style="left:269.97px;top:19.13px;font-size:11.9px;transform:scaleX(1.0767);">1er Nivel</span><span class="t rt" style="left:423.64px;top:19.13px;font-size:11.9px;transform:scaleX(1.1183);">Educación Física, Recreación y Deporte</span><span class="t rt" style="left:838.89px;top:19.13px;font-size:11.9px;transform:scaleX(1.0907);">1er Corte</span><span class="t rt" style="left:1098.46px;top:19.13px;font-size:11.9px;transform:scaleX(1.0977);">Evaluación 1</span><span class="t rt" style="left:1310.29px;top:19.13px;font-size:11.9px;transform:scaleX(1.2172);">16/09/2026</span></div>
<div class="tr" style="top:672px"><svg class="i" viewBox="0 0 24 24" style="left:20.00px;top:11.20px;width:24px;height:24px;"><path d="M12 16a2 2 0 0 1 2 2 2 2 0 0 1-2 2 2 2 0 0 1-2-2 2 2 0 0 1 2-2m0-6a2 2 0 0 1 2 2 2 2 0 0 1-2 2 2 2 0 0 1-2-2 2 2 0 0 1 2-2m0-6a2 2 0 0 1 2 2 2 2 0 0 1-2 2 2 2 0 0 1-2-2 2 2 0 0 1 2-2"/></svg><span class="t rt" style="left:80.15px;top:19.13px;font-size:11.9px;transform:scaleX(1.1728);">2026-2027</span><span class="t rt" style="left:269.57px;top:19.13px;font-size:11.9px;transform:scaleX(1.0825);">Guardería</span><span class="t rt" style="left:423.64px;top:19.13px;font-size:11.9px;transform:scaleX(1.1183);">Educación Física, Recreación y Deporte</span><span class="t rt" style="left:838.89px;top:19.13px;font-size:11.9px;transform:scaleX(1.0907);">1er Corte</span><span class="t rt" style="left:1098.46px;top:19.13px;font-size:11.9px;transform:scaleX(1.0977);">Evaluación 1</span><span class="t rt" style="left:1310.29px;top:19.13px;font-size:11.9px;transform:scaleX(1.2172);">16/09/2026</span></div>
</div>
</main>
<div id="glow" style="position:absolute;left:0;top:0;width:1920px;height:961px;pointer-events:none;background:linear-gradient(to bottom,rgba(66,148,245,0.640) 0px,rgba(66,148,245,0.525) 5px,rgba(66,148,245,0.365) 10px,rgba(66,148,245,0.230) 15px,rgba(66,148,245,0.102) 20px,rgba(66,148,245,0.038) 25px,rgba(66,148,245,0.000) 30px) 0 0/100% 30px no-repeat,linear-gradient(to top,rgba(66,148,245,0.640) 0px,rgba(66,148,245,0.525) 5px,rgba(66,148,245,0.365) 10px,rgba(66,148,245,0.230) 15px,rgba(66,148,245,0.102) 20px,rgba(66,148,245,0.038) 25px,rgba(66,148,245,0.000) 30px) 0 100%/100% 30px no-repeat,linear-gradient(to right,rgba(66,148,245,0.640) 0px,rgba(66,148,245,0.525) 5px,rgba(66,148,245,0.365) 10px,rgba(66,148,245,0.230) 15px,rgba(66,148,245,0.102) 20px,rgba(66,148,245,0.038) 25px,rgba(66,148,245,0.000) 30px) 0 0/30px 100% no-repeat,linear-gradient(to left,rgba(66,148,245,0.640) 0px,rgba(66,148,245,0.525) 5px,rgba(66,148,245,0.365) 10px,rgba(66,148,245,0.230) 15px,rgba(66,148,245,0.102) 20px,rgba(66,148,245,0.038) 25px,rgba(66,148,245,0.000) 30px) 100% 0/30px 100% no-repeat;-webkit-mask-image:linear-gradient(to right,rgba(0,0,0,.53),rgba(0,0,0,.72) 50%,#000);mask-image:linear-gradient(to right,rgba(0,0,0,.53),rgba(0,0,0,.72) 50%,#000)"></div>
<svg class="a" style="left:1862px;top:133px;width:16px;height:24px;overflow:visible" viewBox="0 0 16 24"><path d="M2.6 2.9 L2.6 15.6 L5.7 12.8 L8.6 19.6 L10 19 L7.3 12.3 L12 11.6 Z" fill="#000" stroke="#f3f3f3" stroke-width="2.2" stroke-linejoin="round"/><path d="M2.6 2.9 L2.6 15.6 L5.7 12.8 L8.6 19.6 L10 19 L7.3 12.3 L12 11.6 Z" fill="#000" stroke="#000" stroke-width="1" stroke-linejoin="round"/></svg>
</body></html>
